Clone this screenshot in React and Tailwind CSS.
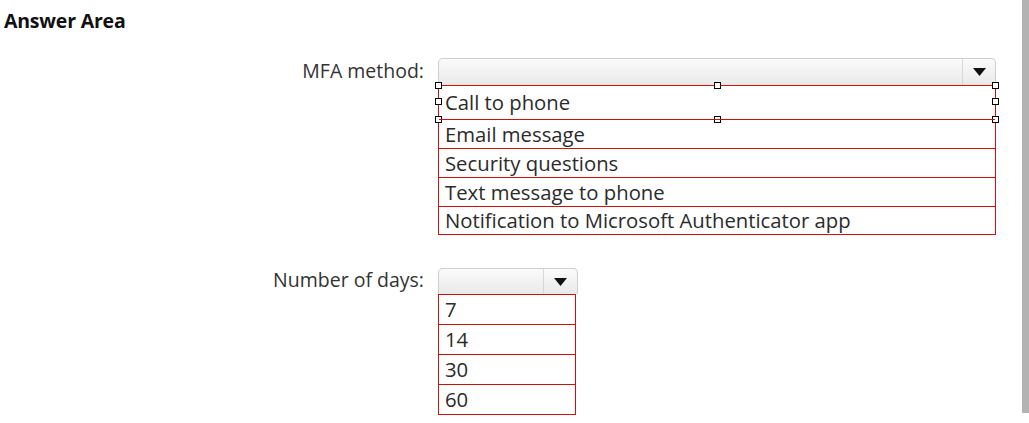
import React from 'react';

const font = { fontFamily: '"Open Sans", "Noto Sans", sans-serif' };

function Handle({ className }) {
  return <span className={`absolute w-[7px] h-[7px] bg-white border border-black ${className}`} />;
}

function SelectBox({ width, height, arrowWidth }) {
  return (
    <div className={`flex ${height} ${width} rounded-t-[5px] border border-b-0 border-[#cfcfcf] bg-gradient-to-b from-[#fbfbfb] to-[#e9e9e9]`}>
      <div className="flex-1" />
      <div className={`${arrowWidth} flex items-center justify-center border-l border-[#d6d6d6]`}>
        <svg width="13" height="8" viewBox="0 0 13 8">
          <path d="M0 0 H13 L6.5 8 Z" fill="#111" />
        </svg>
      </div>
    </div>
  );
}

function OptionList({ items, width, firstSelected, rowHeights }) {
  return (
    <div className={`${width} border border-[#cc1111] border-t-0`}>
      {items.map((item, i) => (
        <div
          key={item}
          className={`relative border-t border-[#cc1111] pl-[6px] flex items-center text-[20.3px] text-[#2b2b2b] ${rowHeights[i]}`}
        >
          {item}
          {firstSelected && i === 0 && (
            <>
              <Handle className="left-[-4px] top-[-4px]" />
              <Handle className="left-[-4px] top-[12px]" />
              <Handle className="left-[-4px] bottom-[-4px]" />
              <Handle className="left-[275px] top-[-4px]" />
              <Handle className="left-[275px] bottom-[-4px]" />
              <Handle className="right-[-4px] top-[-4px]" />
              <Handle className="right-[-4px] top-[12px]" />
              <Handle className="right-[-4px] bottom-[-4px]" />
            </>
          )}
        </div>
      ))}
    </div>
  );
}

export default function App() {
  return (
    <div className="w-[1029px] h-[423px] bg-white flex overflow-hidden" style={font}>
      <div className="flex-1 flex flex-col">
        <div className="pl-[4px] pt-[8px] text-[19.5px] font-bold text-[#111] leading-[26px] tracking-[-0.2px]">Answer Area</div>

        <div className="flex mt-[24px]">
          <div className="w-[424px] text-right text-[19.5px] text-[#333] leading-[27px] -mt-[1px]">MFA method:</div>
          <div className="ml-[14px] flex flex-col">
            <SelectBox width="w-[558px]" height="h-[27px]" arrowWidth="w-[33px]" />
            <OptionList
              width="w-[558px]"
              firstSelected
              items={[
                'Call to phone',
                'Email message',
                'Security questions',
                'Text message to phone',
                'Notification to Microsoft Authenticator app',
              ]}
              rowHeights={['h-[34px]', 'h-[29px]', 'h-[29px]', 'h-[29px]', 'h-[28px]']}
            />
          </div>
        </div>

        <div className="flex mt-[33px]">
          <div className="w-[424px] text-right text-[19.5px] text-[#333] leading-[26px] -mt-[1px]">Number of days:</div>
          <div className="ml-[14px] flex flex-col">
            <SelectBox width="w-[140px]" height="h-[26px]" arrowWidth="w-[34px]" />
            <OptionList
              width="w-[138px]"
              items={['7', '14', '30', '60']}
              rowHeights={['h-[30px]', 'h-[30px]', 'h-[30px]', 'h-[30px]']}
            />
          </div>
        </div>
      </div>
      <div className="w-[7px] h-[413px] bg-[#b3b3b3]" />
    </div>
  );
}
